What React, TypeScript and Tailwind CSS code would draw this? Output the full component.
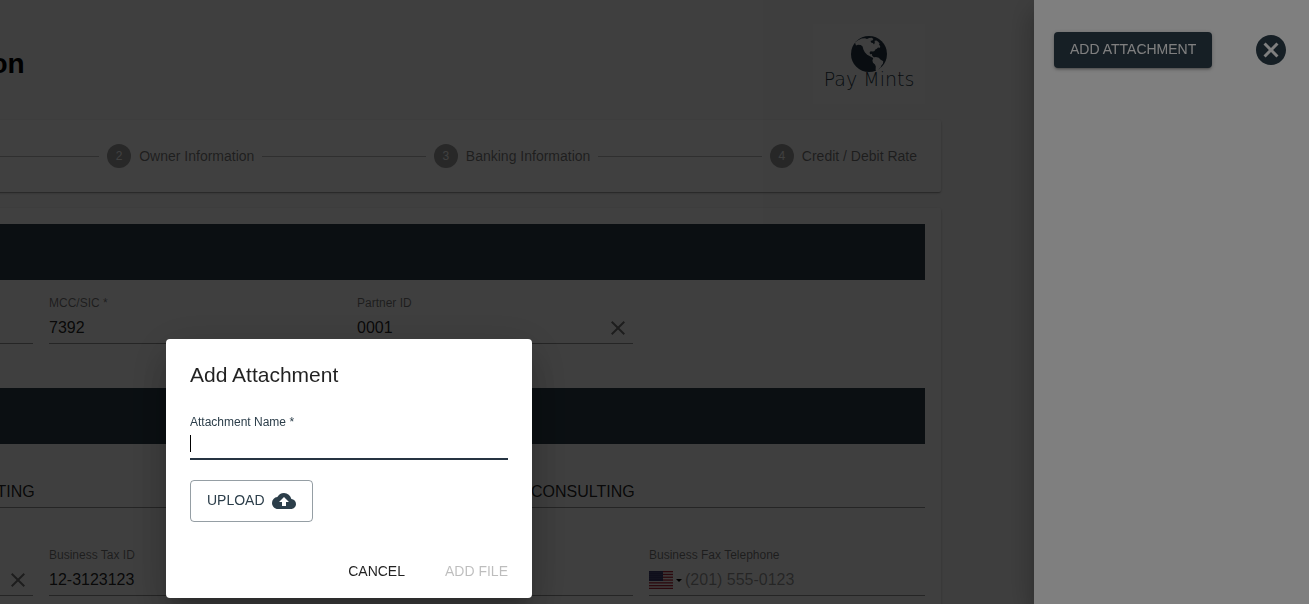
import { MdCancel, MdClose, MdCloudUpload } from "react-icons/md";

const steps = [
  { number: 1, label: "Business Information" },
  { number: 2, label: "Owner Information" },
  { number: 3, label: "Banking Information" },
  { number: 4, label: "Credit / Debit Rate" },
];

const flagStripes = [0, 1, 2, 3, 4, 5, 6];

function Logo() {
  return (
    <div className="flex h-20 w-28 flex-col items-center bg-white pt-3">
      <svg viewBox="0 0 36 36" className="size-9 shrink-0" aria-hidden="true">
        <circle cx="18" cy="18" r="18" fill="#243746" />
        <path
          fill="#fff"
          d="M4 6.4 6.6 4.6l4-2 3.4-.4 2 .8 2.2-1 2.6-.2 1.6 1.2-1 1.4-1.8.4.4 1.6 1.8.6 1.2 1.4.8-1.6-.2-2 1.8-.4 1.8 1.4 1.4 1.8-.6 1 1.2 1.6-.2 1.6-2-.2-1.2 1.2-1.8 1-.4 1.2-1.6.6-2.4-.4-1 1.2.4 1.8 1.8-.2.4 1.8 1.6 1.4 1.2.6-.6.8-2.2-1.2-2.2-1.2-2.8-1.4-2.4-2.6-1.4-2.6-.8-3-1.8-1.6-2.8-.2-2 .8z"
        />
        <path
          fill="#fff"
          d="m22.4 21.8 2.4-.8 3 .8 1.6 1.8 2.8 1.6-.2 2.2-1.6 2-.8 2.2-1.8 1.4-1 1.8-1.4.6-.8-1.4.2-3.6-.8-2-2-1.6-.6-2.4z"
        />
      </svg>
      <span className="-mt-[5px] font-['DejaVu_Sans',sans-serif] text-[19px] leading-6 font-extralight text-[#243746]">
        Pay Mints
      </span>
    </div>
  );
}

function Stepper() {
  return (
    <ol className="flex items-center rounded-xs bg-white p-6 shadow-[0_1px_3px_rgba(0,0,0,0.2),0_1px_1px_rgba(0,0,0,0.14),0_2px_1px_-1px_rgba(0,0,0,0.12)]">
      {steps.map((step) => (
        <li
          key={step.number}
          className="flex grow items-center gap-2 first:grow-0"
        >
          {step.number > 1 && <span className="ml-2 h-px grow bg-[#bdbdbd]" />}
          <span className="flex size-6 items-center justify-center rounded-full bg-black/38 text-xs text-white">
            {step.number}
          </span>
          <span className="text-sm whitespace-nowrap text-black/54">
            {step.label}
          </span>
        </li>
      ))}
    </ol>
  );
}

function Flag() {
  return (
    <svg viewBox="0 0 24 18" className="h-[18px] w-6 shrink-0" aria-hidden="true">
      <rect width="24" height="18" fill="#f4f4f4" />
      {flagStripes.map((i) => (
        <rect key={i} y={i * 2.8} width="24" height="1.3" fill="#b22234" />
      ))}
      <rect width="14" height="10" fill="#3c3b6e" />
      {flagStripes.map((i) => (
        <path
          key={i}
          d={`M${i * 2 + 1} 1v8`}
          stroke="#8f93b5"
          strokeWidth="0.6"
          strokeDasharray="0.6 1.4"
        />
      ))}
    </svg>
  );
}

type FieldProps = {
  id: string;
  label: string;
  value?: string;
  placeholder?: string;
  clearable?: boolean;
  phone?: boolean;
};

function Field({ id, label, value, placeholder, clearable, phone }: FieldProps) {
  return (
    <div className="flex h-12 min-w-0 flex-1 flex-col justify-between border-b border-black/42">
      <label htmlFor={id} className="text-xs leading-[14px] text-black/54">
        {label}
      </label>
      <div className="flex h-8 items-center pt-0.5">
        {phone && (
          <button
            type="button"
            aria-label="Country"
            className="flex items-center gap-[3px] pr-[3px]"
          >
            <Flag />
            <span className="border-x-3 border-t-3 border-x-transparent border-t-black" />
          </button>
        )}
        <input
          id={id}
          defaultValue={value}
          placeholder={placeholder}
          className="min-w-0 grow bg-transparent text-base text-black/87 outline-none placeholder:text-black/42"
        />
        {clearable && (
          <button
            type="button"
            aria-label={`Clear ${label}`}
            className="pr-[3px] text-black/54"
          >
            <MdClose className="size-6" />
          </button>
        )}
      </div>
    </div>
  );
}

function AttachmentDrawer() {
  return (
    <div className="fixed inset-0 z-10 flex justify-end bg-black/50">
      <aside className="w-[275px] bg-white px-5 pt-8 shadow-[0_8px_10px_-5px_rgba(0,0,0,0.2),0_16px_24px_2px_rgba(0,0,0,0.14),0_6px_30px_5px_rgba(0,0,0,0.12)]">
        <div className="flex items-center justify-between">
          <button
            type="button"
            className="h-9 rounded bg-[#2c3e4a] px-4 pb-0.5 text-sm whitespace-nowrap text-white shadow-[0_1px_5px_rgba(0,0,0,0.2),0_2px_2px_rgba(0,0,0,0.14),0_3px_1px_-2px_rgba(0,0,0,0.12)]"
          >
            ADD ATTACHMENT
          </button>
          <button type="button" aria-label="Close" className="text-[#2c3e4a]">
            <MdCancel className="size-9" />
          </button>
        </div>
      </aside>
    </div>
  );
}

function AttachmentDialog() {
  return (
    <div className="fixed inset-0 z-20 flex items-end bg-black/50 pb-1.5 pl-[166px]">
      <form
        role="dialog"
        aria-labelledby="dialog-title"
        className="w-[366px] rounded bg-white shadow-[0_11px_15px_-7px_rgba(0,0,0,0.2),0_24px_38px_3px_rgba(0,0,0,0.14),0_9px_46px_8px_rgba(0,0,0,0.12)]"
      >
        <h2
          id="dialog-title"
          className="px-6 pt-6 text-[21px] leading-6 text-black/87"
        >
          Add Attachment
        </h2>
        <div className="px-6 pt-7">
          <label
            htmlFor="attachment-name"
            className="block text-xs leading-[14px] text-[#2c3e4a]"
          >
            Attachment Name *
          </label>
          <div className="flex h-[31px] items-center border-b-2 border-[#263442]">
            <span className="h-[17px] w-px bg-black" />
            <input
              id="attachment-name"
              required
              className="min-w-0 grow bg-transparent text-base caret-transparent outline-none"
            />
          </div>
          <button
            type="button"
            className="mt-5 flex h-[42px] items-center gap-[7px] rounded border border-[#2c3e4a]/50 px-4 text-sm text-[#2c3e4a]"
          >
            <span className="pb-0.5">UPLOAD</span>
            <MdCloudUpload className="size-6" />
          </button>
        </div>
        <div className="flex justify-end gap-2 px-2 pt-8 pb-2 text-sm">
          <button type="button" className="h-9 px-4 pb-0.5 text-black/87">
            CANCEL
          </button>
          <button
            type="submit"
            disabled
            className="h-9 px-4 pb-0.5 text-black/26"
          >
            ADD FILE
          </button>
        </div>
      </form>
    </div>
  );
}

export default function App() {
  return (
    <div className="h-screen overflow-hidden bg-[#fafafa] font-['Liberation_Sans',Arial,sans-serif]">
      <main className="mr-92 -ml-[259px]">
        <header className="flex h-30 items-start justify-between pt-6 pr-4">
          <h1 className="pt-5 text-[28px] leading-10 font-bold text-black">
            Merchant Application
          </h1>
          <Logo />
        </header>
        <Stepper />
        <form className="mt-4 rounded-xs bg-white p-4 shadow-[0_1px_3px_rgba(0,0,0,0.2),0_1px_1px_rgba(0,0,0,0.14),0_2px_1px_-1px_rgba(0,0,0,0.12)]">
          <div className="h-14 bg-[#2c3e4a]" />
          <div className="mt-4 grid grid-cols-2 gap-8">
            <div className="flex gap-4">
              <Field id="entity" label="Entity" />
              <Field id="mcc" label="MCC/SIC *" value="7392" />
            </div>
            <div className="flex gap-4">
              <Field id="partner" label="Partner ID" value="0001" clearable />
              <div className="flex-1" />
            </div>
          </div>
          <div className="mt-11 h-14 bg-[#2c3e4a]" />
          <div className="mt-4 grid grid-cols-2 gap-x-8 gap-y-10">
            <Field
              id="legal-name"
              label="Legal Name"
              value="MERCHANT PAYMENT CONSULTING"
            />
            <Field
              id="dba"
              label="DBA"
              value="MERCHANT PAYMENT CONSULTING"
            />
            <div className="flex gap-4">
              <Field id="ownership" label="Ownership" clearable />
              <Field id="tax-id" label="Business Tax ID" value="12-3123123" />
            </div>
            <div className="flex gap-4">
              <Field id="telephone" label="Telephone" />
              <Field
                id="fax"
                label="Business Fax Telephone"
                placeholder="(201) 555-0123"
                phone
              />
            </div>
          </div>
        </form>
      </main>
      <AttachmentDrawer />
      <AttachmentDialog />
    </div>
  );
}
